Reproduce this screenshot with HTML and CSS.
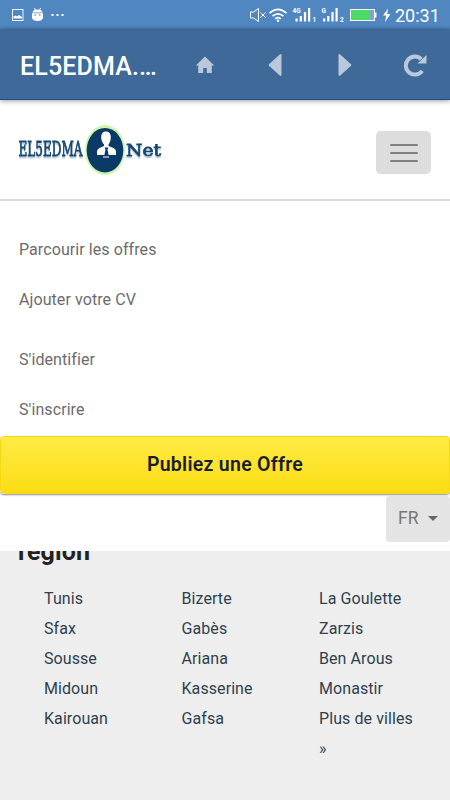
FILE: index.html
```html
<!DOCTYPE html>
<html lang="fr">
    <head>
        <meta charset="UTF-8" />
        <meta name="viewport" content="width=device-width, initial-scale=1.0" />
        <title>EL5EDMA.Net</title>
        <link rel="stylesheet" href="styles.css">
    </head>
    <body>
        <div class="status-bar">
            <svg class="status-left" width="70" height="30" viewBox="0 0 70 30">
                <rect x="12.5" y="9.500" width="10.500" height="11" fill="none" stroke="#fff" stroke-opacity=".9" />
                <path d="M13.500 18.500v-2l2-1 1.500 1 2-1.500 3 2v1.500z" fill="#fff" />
                <path d="M32.500 12.500q.5-3 5-3t5 3zM32 13.300h11v4.700q-1 3-5.500 3T32 18z" fill="#fff" />
                <path d="M34.500 8l1 2.500M40.500 8l-1 2.500" stroke="#fff" />
                <circle cx="35.200" cy="15" r=".8" fill="#5087c1" />
                <circle cx="39.800" cy="15" r=".8" fill="#5087c1" />
                <path d="M51.500 14h2v2h-2zM56.500 14h2v2h-2zM61.500 14h2v2h-2z" fill="#fff" />
            </svg>
            <svg class="status-right" width="145" height="30" viewBox="248 0 145 30">
                <path d="M250.500 12h3l5-3.500v13l-5-3.500h-3z" fill="none" stroke="#fff" />
                <path d="M260.500 12.500l5 5M265.500 12.500l-5 5" stroke="#fff" />
                <g fill="none" stroke="#fff" stroke-width="1.700">
                    <path d="M269.500 13.200q8.500-7.500 17 0" />
                    <path d="M272.500 16.200q5.500-4.800 11 0" />
                    <path d="M275.200 18.800q2.800-2.200 5.600 0" />
                </g>
                <circle cx="278" cy="20.700" r="1.300" fill="#fff" />
                <g fill="#fff">
                    <text class="net-label" x="292.500" y="12.500">4G</text>
                    <path d="M295.500 18.500h2.200v3h-2.200zM299.700 16h2.200v5.500h-2.200zM303.900 12h2.200v9.500h-2.200zM308 8h2.200v13.500h-2.200z" />
                    <text class="net-label" x="312.500" y="22">1</text>
                    <text class="net-label" x="321.500" y="12.500">G</text>
                    <path d="M323 18.500h2.200v3h-2.200zM327.200 16h2.200v5.500h-2.200zM331.400 12h2.200v9.500h-2.200zM335.500 8h2.200v13.500h-2.200z" />
                    <text class="net-label" x="340" y="22">2</text>
                </g>
                <rect x="350.500" y="9.500" width="24" height="11" fill="#7fa6d2" stroke="#fff" />
                <rect x="351" y="10" width="19" height="10" fill="#4cd964" />
                <path d="M375 12.500h1.500v5H375z" fill="#fff" />
                <path d="M388 8.500l-5 7h3.200l-1.200 6.500 5.500-8h-3.300z" fill="#fff" />
            </svg>
            <span class="clock">20:31</span>
        </div>
        <div class="app-bar">
            <span class="app-title">EL5EDMA.…</span>
            <div class="app-nav">
                <svg width="20" height="18" viewBox="0 0 20 18"><path d="M10 .5L.8 9.500h2.400V17h5v-5h3.600v5h5V9.500h2.400z" /></svg>
                <svg width="14" height="24" viewBox="0 0 14 24"><path d="M12 1.200L1 11.200q-.8.800 0 1.600L12 22.800q1.500.5 1.500-1V2.200q0-1.500-1.500-1z" /></svg>
                <svg class="forward" width="14" height="24" viewBox="0 0 14 24"><path d="M2 1.200l11 10q.8.800 0 1.600L2 22.800q-1.500.5-1.500-1V2.200q0-1.500 1.500-1z" /></svg>
                <svg width="24" height="24" viewBox="0 0 24 24">
                    <path class="reload-arc" d="M18.200 6.200A9 9 0 1 0 19.200 17.800" />
                    <path d="M23.500 2v8.500h-9z" />
                </svg>
            </div>
        </div>
        <div class="header">
            <svg class="logo" width="146" height="54" viewBox="17 123 146 54">
                <ellipse cx="105" cy="150" rx="20" ry="25" fill="#cdf6ac" />
                <ellipse cx="105" cy="150.200" rx="18.300" ry="22.300" fill="#0b3a66" />
                <path d="M106 131.500c3.500 0 4.800 2.500 4.800 5.500s-.8 5.500-2.300 7.500v1.500l5 2q2.500 1 2.500 3.500v3.500h-19v-3.500q0-2.500 2.500-3.500l4.500-2v-1.500c-1.800-2-2.800-4.500-2.800-7.500s1.300-5.500 4.800-5.500z" fill="#fff" />
                <path d="M104.500 147.500h4l-1 2 1.200 6h-4.400l1.200-6z" fill="#0b3a66" />
                <path d="M103 157h6" stroke="#fff" />
                <path d="M109.500 154h5.500" stroke="#cdf6ac" />
                <text class="logo-main" x="18.500" y="155.500" textLength="64" lengthAdjust="spacingAndGlyphs">EL5EDMA</text>
                <text class="logo-net" x="126" y="156" textLength="35" lengthAdjust="spacingAndGlyphs">Net</text>
            </svg>
            <button class="menu-toggle">
                <span class="icon-bar"></span>
                <span class="icon-bar"></span>
                <span class="icon-bar"></span>
            </button>
        </div>
        <div class="menu">
            <ul class="menu-list">
                <li>Parcourir les offres</li>
                <li>Ajouter votre CV</li>
            </ul>
            <ul class="menu-list">
                <li>S'identifier</li>
                <li>S'inscrire</li>
            </ul>
            <button class="publish">Publiez une Offre</button>
            <button class="lang">FR <span class="caret"></span></button>
        </div>
        <div class="regions">
            <h2>région</h2>
            <div class="cities">
                <ul>
                    <li>Tunis</li>
                    <li>Sfax</li>
                    <li>Sousse</li>
                    <li>Midoun</li>
                    <li>Kairouan</li>
                </ul>
                <ul>
                    <li>Bizerte</li>
                    <li>Gabès</li>
                    <li>Ariana</li>
                    <li>Kasserine</li>
                    <li>Gafsa</li>
                </ul>
                <ul>
                    <li>La Goulette</li>
                    <li>Zarzis</li>
                    <li>Ben Arous</li>
                    <li>Monastir</li>
                    <li>Plus de villes »</li>
                </ul>
            </div>
        </div>
    </body>
</html>
```
FILE: styles.css
```css
* {
    box-sizing: border-box;
}
body {
    margin: 0;
    height: 800px;
    display: flex;
    flex-direction: column;
    overflow: hidden;
    font-family: Roboto, sans-serif;
    font-size: 16px;
    background-color: #fff;
}
ul {
    list-style: none;
    margin: 0;
    padding: 0;
}
button {
    border: none;
    font-family: inherit;
    cursor: pointer;
}
.status-bar {
    display: flex;
    align-items: center;
    height: 30px;
    flex: none;
    padding-right: 11px;
    background: linear-gradient(#5087c1 26px, #4473a6 30px);
    color: #fff;
}
.status-right {
    margin-left: auto;
}
.net-label {
    font-size: 6.5px;
    font-weight: bold;
}
.clock {
    width: 44px;
    margin-left: 2px;
    padding-top: 2px;
    font-size: 18px;
    line-height: 28px;
    white-space: nowrap;
}
.app-bar {
    display: flex;
    align-items: center;
    justify-content: space-between;
    height: 70px;
    flex: none;
    padding: 0 23px 4px 20px;
    background-color: #3e6998;
    border-bottom: 1px solid #1b5087;
    box-shadow: 0 1px 5px rgba(0, 0, 0, 0.4);
}
.app-title {
    color: #fff;
    font-size: 25px;
    font-weight: 500;
    letter-spacing: 0.15px;
    padding-top: 8px;
}
.app-nav {
    display: flex;
    align-items: center;
    justify-content: space-between;
    width: 232px;
    padding-top: 5px;
}
.app-nav svg {
    fill: #b9c8da;
}
.app-nav .forward {
    margin: 0 -2px 0 2px;
}
.app-nav .reload-arc {
    fill: none;
    stroke: #b9c8da;
    stroke-width: 4;
}
.header {
    display: flex;
    align-items: center;
    justify-content: space-between;
    height: 101px;
    flex: none;
    padding: 6px 19px 0 17px;
    border-bottom: 2px solid #dcdcdc;
}
.logo {
    margin-bottom: 6px;
}
.logo text {
    font-family: "DejaVu Serif", serif;
    fill: #174872;
    stroke: #174872;
    stroke-width: 0.8;
    filter: drop-shadow(0 2px 0 rgba(23, 72, 114, 0.25));
}
.logo-main {
    font-size: 19.5px;
}
.logo-net {
    font-size: 17.5px;
}
.menu-toggle {
    display: flex;
    flex-direction: column;
    align-items: center;
    justify-content: center;
    gap: 6px;
    width: 55px;
    height: 43px;
    padding: 0;
    border-radius: 5px;
    background-color: #ddd;
}
.icon-bar {
    width: 28px;
    height: 2px;
    border-radius: 1px;
    background-color: #808080;
}
.menu {
    display: flex;
    flex-direction: column;
    height: 350px;
    flex: none;
    padding-top: 24px;
}
.menu-list {
    padding-left: 19px;
    margin-bottom: 10px;
    color: #6c6c6c;
    letter-spacing: 0.08px;
}
.menu-list li {
    height: 50px;
    line-height: 50px;
}
.menu-list + .menu-list {
    margin-bottom: 1px;
}
.publish {
    height: 58px;
    flex: none;
    border: 1px solid #f5d914;
    border-radius: 4px;
    padding: 0 0 1px;
    background: linear-gradient(#ffeb44, #fbdd14);
    box-shadow: 0 1px 2px rgba(0, 0, 0, 0.45);
    color: #1a1c2c;
    font-size: 19.5px;
    font-weight: 600;
    letter-spacing: 0.28px;
}
.lang {
    display: flex;
    align-items: center;
    align-self: flex-end;
    gap: 10px;
    width: 64px;
    height: 46px;
    margin-top: 2px;
    padding: 0 10px 2px 12px;
    border-radius: 4px;
    background-color: #e4e4e4;
    color: #777;
    font-size: 17.5px;
}
.caret {
    border-top: 5px solid #666;
    border-left: 5px solid transparent;
    border-right: 5px solid transparent;
}
.regions {
    flex: 1;
    overflow: hidden;
    background-color: #eee;
    color: #2f414e;
}
.regions h2 {
    margin: -14px 0 18px 18px;
    color: #222;
    font-size: 25px;
    line-height: 29px;
    font-weight: bold;
    letter-spacing: 0.1px;
}
.cities {
    display: grid;
    grid-template-columns: repeat(3, 137.5px);
    padding-left: 44px;
    letter-spacing: 0.08px;
}
.cities ul {
    padding-right: 38px;
}
.cities li {
    line-height: 30px;
}
```
